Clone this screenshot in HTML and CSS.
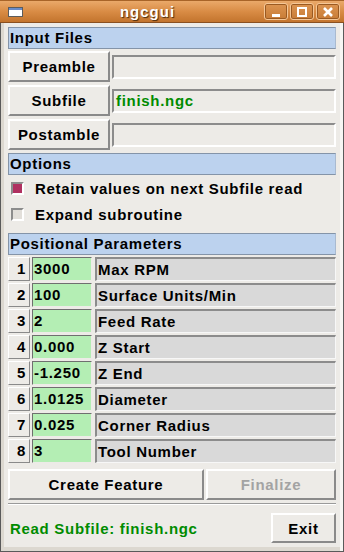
FILE: index.html
```html
<!DOCTYPE html>
<html>
<head>
    <title>ngcgui</title>
    <meta name="viewport" content="width=device-width, initial-scale=1" />
    <link rel="stylesheet" href="styles.css">
</head>
<body>
    <div class="window">
        <div class="titlebar">
            <svg class="app-icon" width="15" height="10" viewBox="0 0 15 10">
                <rect x="0.5" y="0.5" width="14" height="9" fill="#ffffff" stroke="#5c5c5c" />
                <rect x="1" y="1" width="13" height="2" fill="#6a8cc8" />
            </svg>
            <div class="title">ngcgui</div>
            <div class="wm-buttons">
                <div class="wm-btn">
                    <svg width="12" height="12" viewBox="0 0 12 12"><rect x="2" y="8" width="8" height="3" fill="#ffffff" /></svg>
                </div>
                <div class="wm-btn">
                    <svg width="12" height="12" viewBox="0 0 12 12"><rect x="2" y="2" width="8" height="8" fill="none" stroke="#ffffff" stroke-width="2" /></svg>
                </div>
                <div class="wm-btn">
                    <svg width="12" height="12" viewBox="0 0 12 12"><path d="M2 2 L10 10 M10 2 L2 10" stroke="#ffffff" stroke-width="2.6" /></svg>
                </div>
            </div>
        </div>

        <div class="client">
            <div class="header first">Input Files</div>
            <div class="file-row">
                <button class="btn file-btn">Preamble</button>
                <div class="entry"></div>
            </div>
            <div class="file-row">
                <button class="btn file-btn">Subfile</button>
                <div class="entry">finish.ngc</div>
            </div>
            <div class="file-row">
                <button class="btn file-btn">Postamble</button>
                <div class="entry"></div>
            </div>

            <div class="header">Options</div>
            <label class="check"><span class="indicator on"></span>Retain values on next Subfile read</label>
            <label class="check"><span class="indicator"></span>Expand subroutine</label>

            <div class="header params-header">Positional Parameters</div>
            <div class="params">
                <div class="param-row"><span class="num">1</span><span class="value">3000</span><span class="name">Max RPM</span></div>
                <div class="param-row"><span class="num">2</span><span class="value">100</span><span class="name">Surface Units/Min</span></div>
                <div class="param-row"><span class="num">3</span><span class="value">2</span><span class="name">Feed Rate</span></div>
                <div class="param-row"><span class="num">4</span><span class="value">0.000</span><span class="name">Z Start</span></div>
                <div class="param-row"><span class="num">5</span><span class="value">-1.250</span><span class="name">Z End</span></div>
                <div class="param-row"><span class="num">6</span><span class="value">1.0125</span><span class="name">Diameter</span></div>
                <div class="param-row"><span class="num">7</span><span class="value">0.025</span><span class="name">Corner Radius</span></div>
                <div class="param-row"><span class="num">8</span><span class="value">3</span><span class="name">Tool Number</span></div>
            </div>

            <div class="actions">
                <button class="btn create-btn">Create Feature</button>
                <button class="btn finalize-btn" disabled>Finalize</button>
            </div>
            <div class="separator"></div>
            <div class="status-row">
                <span class="status">Read Subfile: finish.ngc</span>
                <button class="btn exit-btn">Exit</button>
            </div>
        </div>
    </div>
</body>
</html>
```

FILE: styles.css
```css
body {
    margin: 0;
    font-family: "Liberation Sans", Arial, sans-serif;
    font-weight: bold;
    font-size: 15px;
    letter-spacing: 0.7px;
    color: #000;
    background-color: #edebe7;
}

.window {
    width: 344px;
    height: 552px;
    display: flex;
    flex-direction: column;
    background-color: #edebe7;
}

/* window manager title bar */
.titlebar {
    height: 23px;
    box-sizing: border-box;
    display: flex;
    align-items: center;
    padding: 0 4px 0 8px;
    background: linear-gradient(#eaa96a, #d98c45 50%, #c3742d);
    border-top: 1px solid #a86428;
    border-bottom: 1px solid #8a5020;
}

.app-icon {
    display: block;
}

.title {
    flex: 1;
    text-align: center;
    padding-left: 8px;
    color: #fff;
    font-size: 15px;
    letter-spacing: 1px;
    text-shadow: 1px 1px 1px #4a2a0c;
}

.wm-buttons {
    display: flex;
    gap: 2px;
}

.wm-btn {
    width: 24px;
    height: 17px;
    box-sizing: border-box;
    display: flex;
    align-items: center;
    justify-content: center;
    border: 1px solid #f4c696;
    border-radius: 3px;
    box-shadow: inset 0 0 0 1px #9a5a22;
    background: linear-gradient(#dc9451, #c87c36);
}

.wm-btn svg {
    display: block;
}

/* client area */
.client {
    flex: 1;
    display: flex;
    flex-direction: column;
    padding: 0 7px;
    border-left: 1px solid #5a5a5a;
    border-right: 1px solid #5a5a5a;
    border-bottom: 1px solid #5a5a5a;
    box-shadow: inset 3px 0 #dcd8d0, inset -3px 0 #f7f6f3, inset 0 -4px #dcd8d0;
}

.header {
    height: 22px;
    box-sizing: border-box;
    margin-top: 3px;
    padding-left: 1px;
    line-height: 20px;
    background-color: #bcd2ee;
    border: 1px solid #8494a8;
    border-right-color: #a9bad0;
}

.header.first {
    margin-top: 4px;
}

.params-header {
    margin-top: 6px;
}

.btn {
    font: inherit;
    letter-spacing: inherit;
    color: #000;
    background-color: #edebe7;
    padding: 0;
    box-sizing: border-box;
    border: 2px solid;
    border-color: #ffffff #8a8a8a #8a8a8a #ffffff;
}

.file-row {
    display: flex;
    gap: 2px;
    height: 31px;
    margin-top: 3px;
}

.header + .file-row {
    margin-top: 2px;
}

.file-btn {
    width: 102px;
}

.entry {
    flex: 1;
    margin: 4px 0 3px;
    box-sizing: border-box;
    padding-left: 2px;
    line-height: 20px;
    color: #008b00;
    border: 2px solid;
    border-color: #8c8c8c #ffffff #ffffff #8c8c8c;
}

.check {
    height: 26px;
    display: flex;
    align-items: center;
}

.indicator {
    width: 13px;
    height: 13px;
    box-sizing: border-box;
    margin: 0 11px 0 3px;
    border: 2px solid;
    border-color: #8c8c8c #ffffff #ffffff #8c8c8c;
    background-color: #e2dfda;
}

.indicator.on {
    background-color: #b03060;
}

.params {
    display: flex;
    flex-direction: column;
    gap: 2px;
    margin-top: 2px;
}

.param-row {
    display: flex;
    height: 24px;
}

.num {
    width: 22px;
    box-sizing: border-box;
    text-align: right;
    padding-right: 3px;
    line-height: 22px;
    border: 1px solid;
    border-color: #ffffff #8a8a8a #8a8a8a #ffffff;
}

.value {
    width: 60px;
    margin-left: 2px;
    box-sizing: border-box;
    padding-left: 1px;
    line-height: 22px;
    background-color: #b4eeb4;
    border: 1px solid;
    border-color: #6f6f6f #edebe7 #edebe7 #6f6f6f;
}

.name {
    flex: 1;
    margin-left: 3px;
    box-sizing: border-box;
    padding-left: 1px;
    line-height: 21px;
    background-color: #d9d9d9;
    border: 2px solid;
    border-color: #8c8c8c #f7f7f7 #f7f7f7 #8c8c8c;
    border-bottom-width: 1px;
    border-right-width: 1px;
}

.actions {
    display: flex;
    gap: 2px;
    height: 31px;
    margin-top: 6px;
}

.create-btn {
    width: 196px;
}

.finalize-btn {
    flex: 1;
    color: #a3a3a3;
}

.separator {
    margin-top: 3px;
    border-top: 1px solid #9a9a9a;
    border-bottom: 1px solid #ffffff;
}

.status-row {
    display: flex;
    align-items: center;
    justify-content: space-between;
    margin-top: 8px;
}

.status {
    padding-left: 2px;
    color: #008b00;
}

.exit-btn {
    width: 65px;
    height: 30px;
}
```
